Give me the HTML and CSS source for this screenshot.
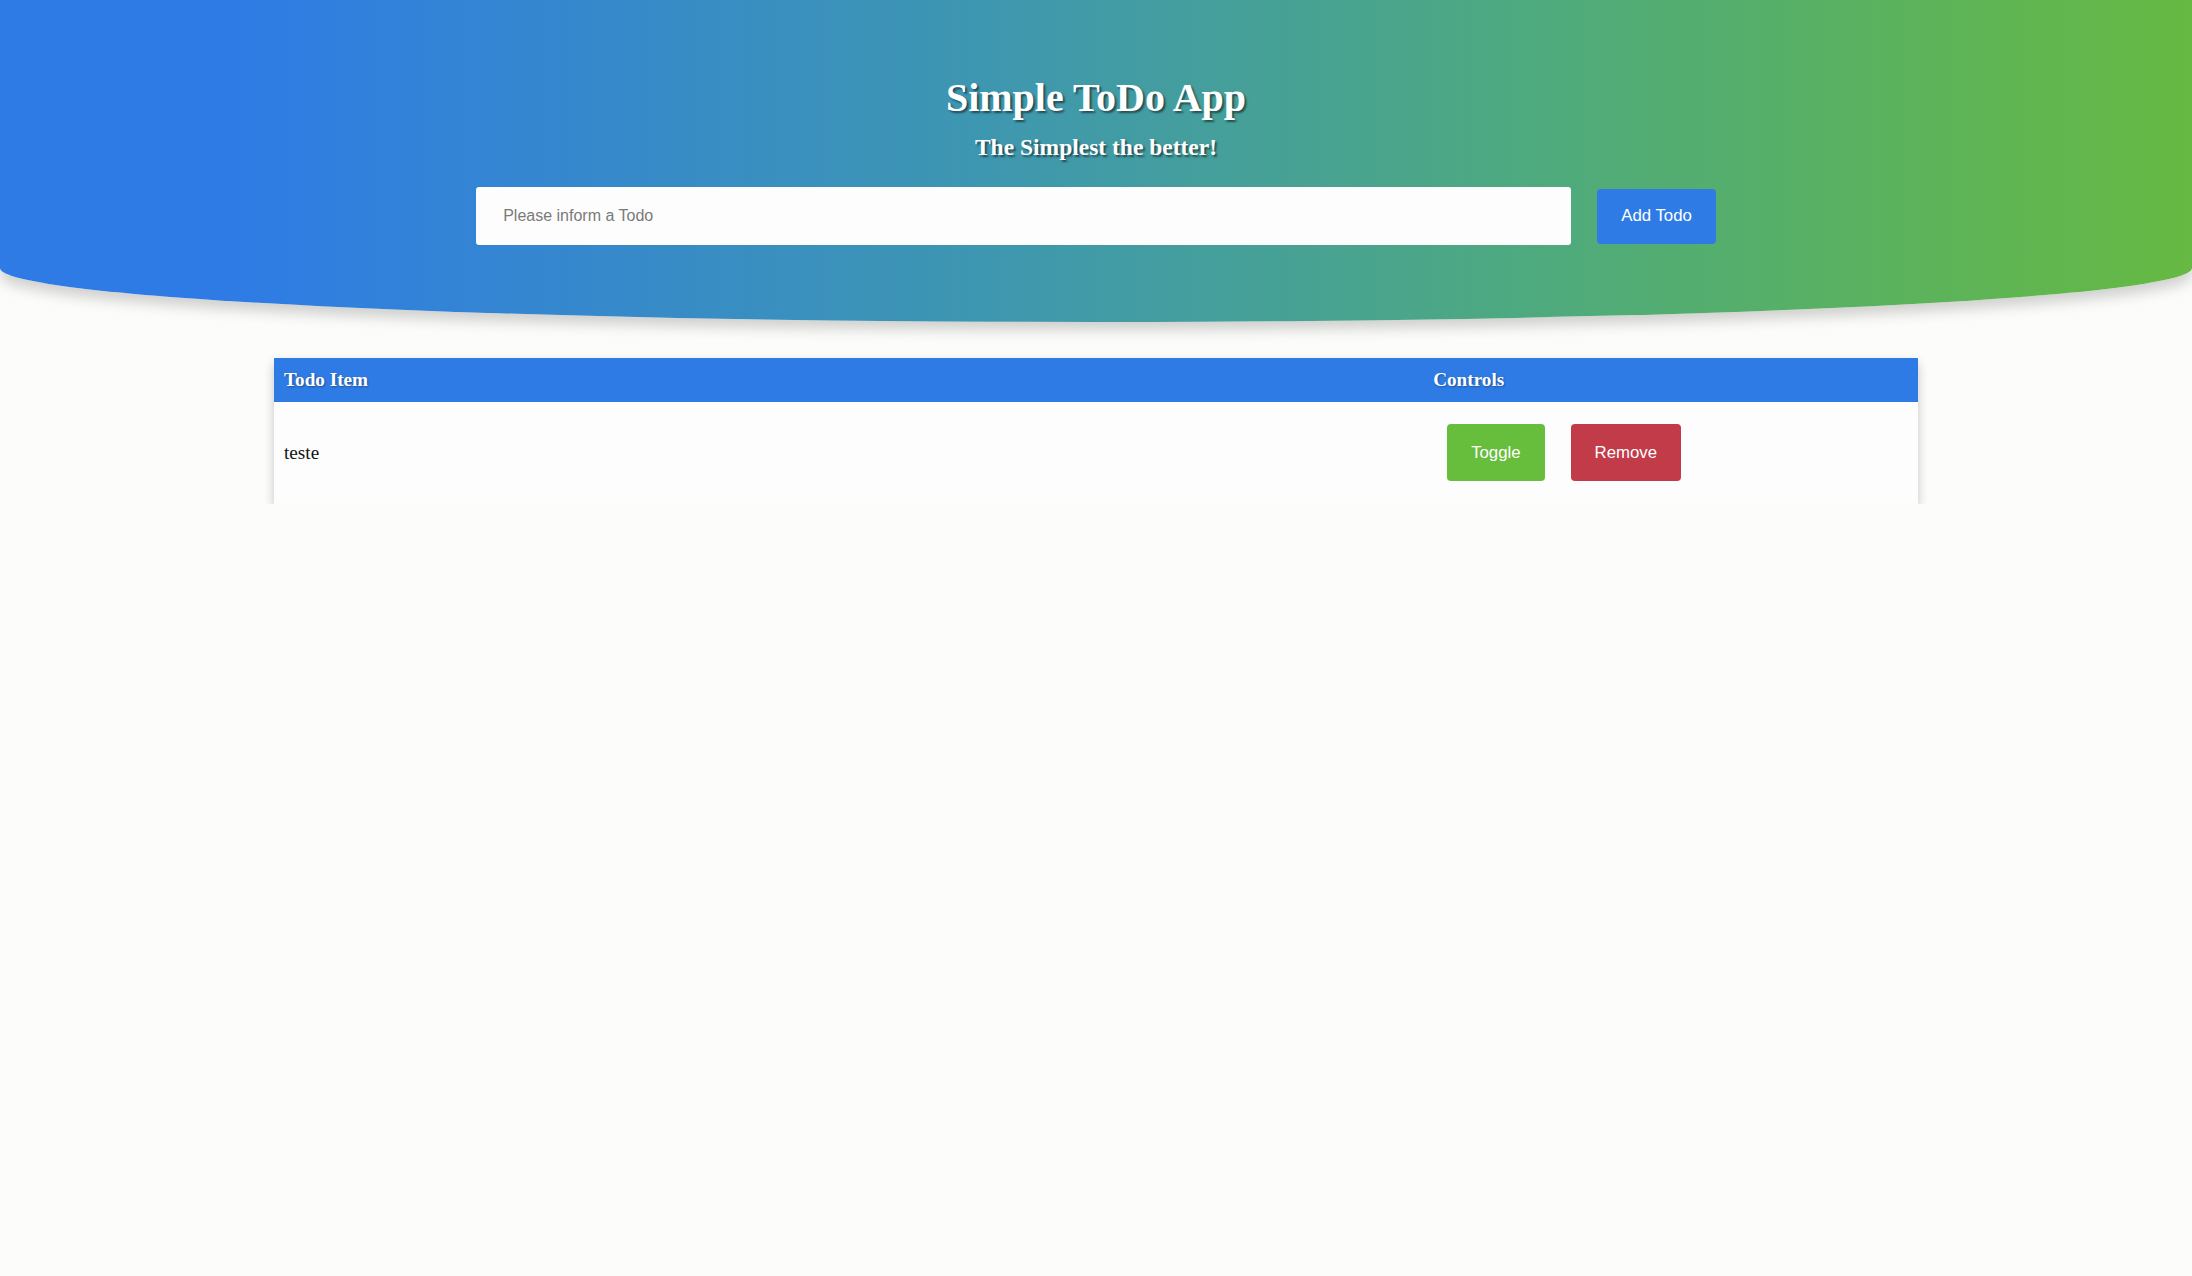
FILE: index.html
```html
<!DOCTYPE html>
<html lang="en">
<head>
<meta charset="utf-8">
<title>Simple ToDo App</title>
<link rel="stylesheet" href="styles.css">
</head>
<body>
  <header class="hero">
    <h1 class="hero-title">Simple ToDo App</h1>
    <h3 class="hero-subtitle">The Simplest the better!</h3>
    <form class="todo-form">
      <input class="todo-input" type="text" placeholder="Please inform a Todo">
      <button class="btn btn-add" type="button">Add Todo</button>
    </form>
  </header>
  <main>
    <table class="todo-table">
      <thead>
        <tr>
          <th class="col-item">Todo Item</th>
          <th class="col-controls">Controls</th>
        </tr>
      </thead>
      <tbody>
        <tr>
          <td class="cell-item">teste</td>
          <td class="cell-controls">
            <button class="btn btn-toggle" type="button">Toggle</button>
            <button class="btn btn-remove" type="button">Remove</button>
          </td>
        </tr>
      </tbody>
    </table>
  </main>
</body>
</html>
```
FILE: styles.css
```css
html, body {
  margin: 0;
  padding: 0;
}
body {
  background: #fcfcfb;
  font-family: "Liberation Serif", "Times New Roman", serif;
  color: #111;
}
.hero {
  box-sizing: border-box;
  height: 322px;
  padding-top: 75px;
  display: flex;
  flex-direction: column;
  align-items: center;
  background: linear-gradient(90deg, #2e7be6 10%, #3e97b0 45%, #4eaa7e 70%, #66b942 100%);
  border-radius: 0 0 50% 50% / 0 0 54px 54px;
  box-shadow: 0 8px 14px rgba(0, 0, 0, 0.18);
}
.hero-title {
  margin: 0;
  font-size: 40px;
  line-height: 46px;
  font-weight: bold;
  color: #fff;
  text-shadow: 2px 2px 2px rgba(0, 0, 0, 0.5);
}
.hero-subtitle {
  margin: 13px 0 0;
  font-size: 23.5px;
  line-height: 26px;
  font-weight: bold;
  color: #fff;
  text-shadow: 2px 2px 2px rgba(0, 0, 0, 0.5);
}
.todo-form {
  margin-top: 27px;
  display: flex;
  align-items: center;
  gap: 26px;
}
.todo-input {
  box-sizing: border-box;
  width: 1095px;
  height: 58px;
  padding: 0 27px;
  border: none;
  border-radius: 3px;
  background: #fdfdfd;
  font-family: "Liberation Sans", Arial, sans-serif;
  font-size: 16px;
  color: #333;
  outline: none;
}
.todo-input::placeholder {
  color: #7a7a7a;
}
.btn {
  border: none;
  border-radius: 4px;
  padding: 0 24px;
  color: #fff;
  font-family: "Liberation Sans", Arial, sans-serif;
  font-size: 16.8px;
  cursor: pointer;
}
.btn-add {
  height: 55px;
  background: #2f7be5;
}
.todo-table {
  width: 75%;
  margin: 36px auto 0;
  border-collapse: collapse;
  background: #fdfdfd;
  box-shadow: 0 5px 10px rgba(0, 0, 0, 0.22);
}
.todo-table th {
  background: #2f7be5;
  color: #fff;
  text-align: left;
  font-size: 19.2px;
  line-height: 22px;
  padding: 11px 10px;
  text-shadow: 1px 1px 2px rgba(0, 0, 0, 0.35);
}
.col-item {
  width: 69.9%;
}
.cell-item {
  padding: 0 10px;
  font-size: 19.2px;
  vertical-align: middle;
}
.cell-controls {
  padding: 22px 12px 23px 24px;
  white-space: nowrap;
}
.btn-toggle {
  height: 57px;
  background: #67bd3c;
  margin-right: 22px;
}
.btn-remove {
  height: 57px;
  background: #c23b49;
}
```
